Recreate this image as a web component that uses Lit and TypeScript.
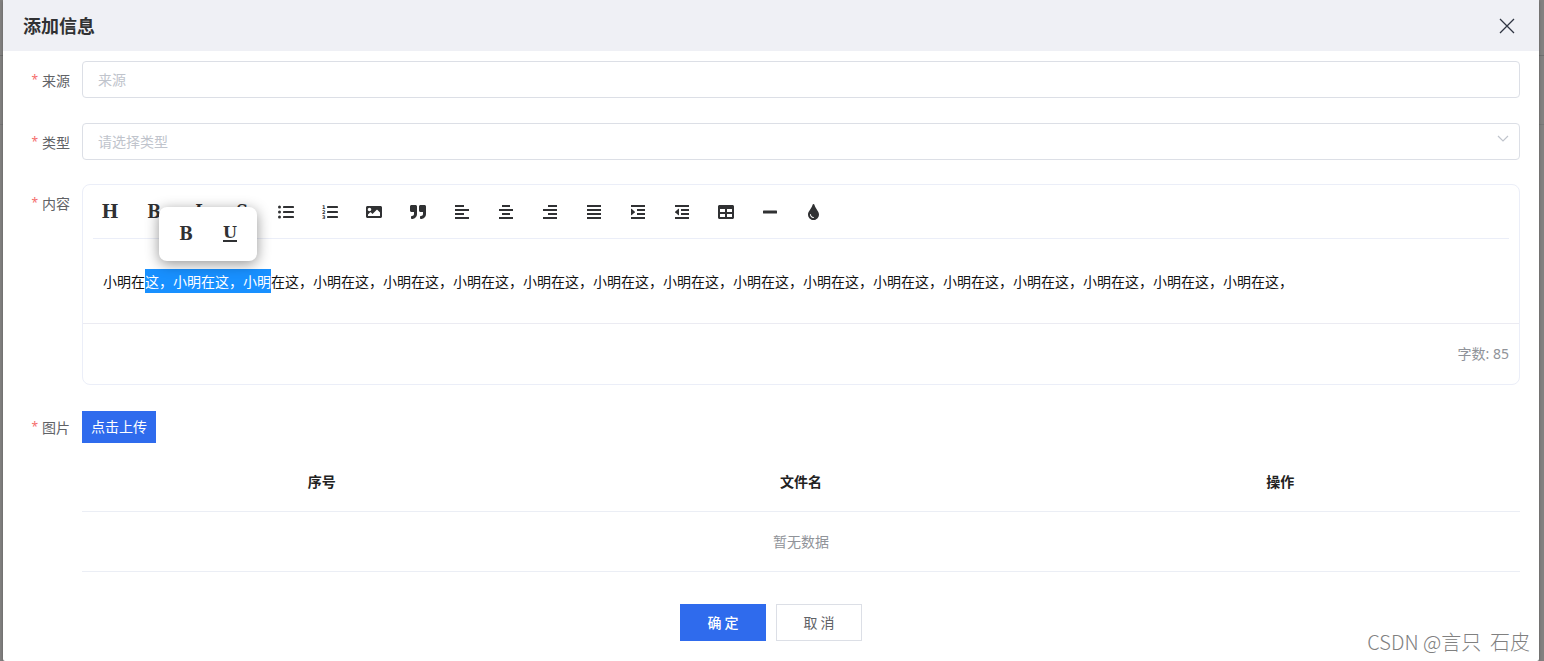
import { LitElement, html, svg, css, type TemplateResult } from "lit";
import { customElement, property } from "lit/decorators.js";

const bars = (xs: [number, number][]) =>
  xs.map(([x, w], i) => svg`<rect x=${x} y=${1 + i * 4} width=${w} height="2"></rect>`);

const listBars = [2, 7, 12].map((y) => svg`<rect x="5" y=${y} width="11" height="2" rx="0.4"></rect>`);

const ICONS: Record<string, TemplateResult | unknown> = {
  ul: svg`${listBars}${[3, 8, 13].map((y) => svg`<circle cx="1.5" cy=${y} r="1.5"></circle>`)}`,
  ol: svg`${listBars}${[1, 2, 3].map((n) => svg`<text class="digit" x="0" y=${n * 5}>${n}</text>`)}`,
  image: svg`<path transform="scale(0.03125)" d="M464 448H48c-26.51 0-48-21.49-48-48V112c0-26.51 21.49-48 48-48h416c26.51 0 48 21.49 48 48v288c0 26.51-21.49 48-48 48zM112 120c-30.928 0-56 25.072-56 56s25.072 56 56 56 56-25.072 56-56-25.072-56-56-56zM64 384h384V272l-87.515-87.515c-4.686-4.686-12.284-4.686-16.971 0L208 320l-55.515-55.515c-4.686-4.686-12.284-4.686-16.971 0L64 336v48z"></path>`,
  quote: svg`<path transform="scale(0.03125)" d="M464 32H336c-26.5 0-48 21.5-48 48v128c0 26.5 21.5 48 48 48h80v64c0 35.3-28.7 64-64 64h-8c-13.3 0-24 10.7-24 24v48c0 13.3 10.7 24 24 24h8c88.4 0 160-71.6 160-160V80c0-26.5-21.5-48-48-48zm-288 0H48C21.5 32 0 53.5 0 80v128c0 26.5 21.5 48 48 48h80v64c0 35.3-28.7 64-64 64h-8c-13.3 0-24 10.7-24 24v48c0 13.3 10.7 24 24 24h8c88.4 0 160-71.6 160-160V80c0-26.5-21.5-48-48-48z"></path>`,
  left: bars([[1, 9], [1, 14], [1, 9], [1, 14]]),
  center: bars([[4, 8], [1, 14], [4, 8], [1, 14]]),
  right: bars([[6, 9], [1, 14], [6, 9], [1, 14]]),
  justify: bars([[1, 14], [1, 14], [1, 14], [1, 14]]),
  indent: svg`${bars([[1, 14], [7, 8], [7, 8], [1, 14]])}<path d="M1 5v6q0 .6.5.2L4.900 8.300q.3-.3 0-.6L1.500 4.800Q1 4.400 1 5z"></path>`,
  outdent: svg`${bars([[1, 14], [7, 8], [7, 8], [1, 14]])}<path d="M5 5v6q0 .6-.5.2L1.100 8.300q-.3-.3 0-.6L4.500 4.800Q5 4.400 5 5z"></path>`,
  table: svg`<path transform="scale(0.03125)" d="M464 32H48C21.49 32 0 53.49 0 80v352c0 26.51 21.49 48 48 48h416c26.51 0 48-21.49 48-48V80c0-26.51-21.49-48-48-48zM224 416H64v-96h160v96zm0-160H64v-96h160v96zm224 160H288v-96h160v96zm0-160H288v-96h160v96z"></path>`,
  line: svg`<rect x="1" y="6.500" width="14" height="3" rx="0.6"></rect>`,
  drop: svg`<path transform="translate(2 0) scale(0.03125)" d="M205.22 22.09c-7.94-28.78-49.44-30.12-58.44 0C100.01 179.85 0 222.72 0 333.91 0 432.35 78.72 512 176 512s176-79.65 176-178.09c0-111.75-99.79-153.34-146.78-311.82zM176 448c-61.75 0-112-50.25-112-112 0-8.84 7.16-16 16-16s16 7.16 16 16c0 44.11 35.89 80 80 80 8.84 0 16 7.16 16 16s-7.16 16-16 16z"></path>`,
};

const TOOLS: { label: string; glyph?: string; icon?: string }[] = [
  { label: "标题", glyph: "H" },
  { label: "加粗", glyph: "B" },
  { label: "斜体", glyph: "I" },
  { label: "删除线", glyph: "S" },
  { label: "无序列表", icon: "ul" },
  { label: "有序列表", icon: "ol" },
  { label: "图片", icon: "image" },
  { label: "引用", icon: "quote" },
  { label: "左对齐", icon: "left" },
  { label: "居中", icon: "center" },
  { label: "右对齐", icon: "right" },
  { label: "两端对齐", icon: "justify" },
  { label: "增加缩进", icon: "indent" },
  { label: "减少缩进", icon: "outdent" },
  { label: "表格", icon: "table" },
  { label: "分割线", icon: "line" },
  { label: "颜色", icon: "drop" },
];

@customElement("tool-button")
class ToolButton extends LitElement {
  @property() label = "";
  @property() glyph = "";
  @property() icon = "";

  static styles = css`
    :host {
      display: block;
    }
    .tool {
      display: flex;
      align-items: center;
      justify-content: center;
      width: 24px;
      height: 24px;
      padding: 0;
      border: 0;
      background: none;
      color: #303133;
      cursor: pointer;
    }
    .icon {
      display: block;
      width: 16px;
      height: 16px;
      fill: currentColor;
    }
    .digit {
      font: bold 5px "DejaVu Sans", sans-serif;
    }
    .glyph {
      font: bold 18px/18px "DejaVu Serif", serif;
    }
    .narrow {
      font-family: "DejaVu Serif Condensed", "DejaVu Serif", serif;
    }
    .italic {
      font-style: italic;
    }
    .under {
      font-size: 16px;
      line-height: 14px;
      height: 14px;
      border-bottom: 2px solid currentColor;
    }
  `;

  render() {
    const kind = { H: "", B: "narrow", I: "narrow italic", S: "narrow", U: "under" }[this.glyph] ?? "";
    return html`<button class="tool" type="button" aria-label=${this.label}>
      ${this.glyph
        ? html`<span class="glyph ${kind}">${this.glyph}</span>`
        : html`<svg class="icon" viewBox="0 0 16 16" aria-hidden="true">${ICONS[this.icon]}</svg>`}
    </button>`;
  }
}

@customElement("rich-editor")
class RichEditor extends LitElement {
  static styles = css`
    .editor {
      position: relative;
      border: 1px solid #ebeef8;
      border-radius: 8px;
      font-size: 14px;
    }
    .toolbar {
      display: flex;
      flex-wrap: wrap;
      gap: 20px;
      margin: 0 10px;
      padding: 15px 5px 14px;
      border-bottom: 1px solid #ebeef8;
    }
    .content {
      padding: 30px 20px;
      line-height: 24px;
      color: #111;
      outline: none;
    }
    .picked {
      display: inline-block;
      background: #1890ff;
      color: #fff;
    }
    .count {
      border-top: 1px solid #ebebf2;
      padding: 18px 10px;
      line-height: 24px;
      text-align: right;
      color: #909399;
      font-family: "Noto Sans", "Noto Sans CJK SC", sans-serif;
    }
    .bubble {
      position: absolute;
      top: 22px;
      left: 76px;
      display: flex;
      gap: 20px;
      padding: 15px;
      border-radius: 8px;
      background: #fff;
      box-shadow: 0 3px 14px rgba(0, 0, 0, 0.42);
    }
  `;

  render() {
    const phrase = "小明在这，";
    return html`<div class="editor">
      <div class="toolbar" role="toolbar" aria-label="编辑工具">
        ${TOOLS.map(
          (t) => html`<tool-button .label=${t.label} .glyph=${t.glyph ?? ""} .icon=${t.icon ?? ""}></tool-button>`,
        )}
      </div>
      <div class="content" role="textbox" aria-label="内容" aria-multiline="true" contenteditable="true">小明在<span class="picked">这，小明在这，小明</span>在这，${phrase.repeat(14)}</div>
      <div class="count">字数: 85</div>
      <div class="bubble" role="toolbar" aria-label="选中文字">
        <tool-button label="加粗" glyph="B"></tool-button>
        <tool-button label="下划线" glyph="U"></tool-button>
      </div>
    </div>`;
  }
}

@customElement("app-root")
class AppRoot extends LitElement {
  static styles = css`
    :host {
      display: block;
      box-sizing: border-box;
      min-height: 100vh;
      padding: 0 5px 0 3px;
      overflow: hidden;
      position: relative;
      font-family: "Noto Sans CJK SC", sans-serif;
      font-size: 14px;
      color: #606266;
      background: linear-gradient(#828180 55px, #6f6f6f 55px, #6f6f6f 56px, #828180 56px, #828180 124px, #777 124px, #777 125px, #828180 125px);
    }
    .dialog {
      display: flex;
      flex-direction: column;
      min-height: 100vh;
      background: #fff;
      border-radius: 0 0 2px 2px;
      box-shadow: 0 1px 3px rgba(0, 0, 0, 0.3);
    }
    .header {
      box-sizing: border-box;
      display: flex;
      align-items: center;
      justify-content: space-between;
      height: 51px;
      padding: 0 24px 0 20px;
      background: #eff0f5;
    }
    .title {
      margin: 0;
      padding-bottom: 2px;
      font-size: 18px;
      line-height: 24px;
      font-weight: 700;
      color: #303133;
    }
    .close {
      display: block;
      width: 16px;
      height: 16px;
      padding: 0;
      border: 0;
      background: none;
      cursor: pointer;
    }
    .close-icon {
      display: block;
      stroke: #2f3542;
      stroke-width: 1.3;
      fill: none;
    }
    .form {
      padding: 10px 19px 20px 20px;
    }
    .row {
      display: grid;
      grid-template-columns: 47px minmax(0, 1fr);
      column-gap: 12px;
      margin-bottom: 25px;
    }
    .row.tight {
      margin-bottom: 24px;
    }
    .row.loose {
      margin-bottom: 26px;
    }
    .row.last {
      margin-bottom: 0;
    }
    .label {
      display: flex;
      justify-content: flex-end;
      align-items: center;
      align-self: start;
      gap: 4px;
      height: 37px;
      line-height: 20px;
      white-space: nowrap;
    }
    .label.short {
      height: 32px;
    }
    .label::before {
      content: "*";
      color: #f56c6c;
      font-family: "Noto Sans", sans-serif;
      font-size: 12px;
    }
    .field {
      box-sizing: border-box;
      display: block;
      width: 100%;
      height: 37px;
      margin: 0;
      padding: 0 15px 2px;
      border: 1px solid #dcdfe6;
      border-radius: 4px;
      background: #fff;
      font: inherit;
      color: #c0c4cc;
      appearance: none;
      outline: none;
    }
    .field::placeholder {
      color: #c0c4cc;
      opacity: 1;
    }
    .select-box {
      display: grid;
    }
    .select-box > * {
      grid-area: 1 / 1;
    }
    .arrow {
      justify-self: end;
      margin: 11px 11px 0 0;
      width: 12px;
      height: 10px;
      stroke: #c0c4cc;
      stroke-width: 1.2;
      fill: none;
      pointer-events: none;
    }
    .btn {
      box-sizing: border-box;
      border: 1px solid #dcdfe6;
      background: #fff;
      color: #606266;
      font: inherit;
      line-height: 20px;
      cursor: pointer;
    }
    .primary {
      border-color: #2f6bed;
      background: #2f6bed;
      color: #fff;
    }
    .upload {
      display: block;
      height: 32px;
      padding: 0 8px 2px;
    }
    .files {
      width: 100%;
      margin-top: 9px;
      border-collapse: separate;
      border-spacing: 0;
      table-layout: fixed;
      text-align: center;
    }
    .cell {
      height: 60px;
      box-sizing: border-box;
      padding: 0 0 2px;
      border-bottom: 1px solid #ebeef5;
    }
    .head {
      font-weight: 700;
      font-size: 14px;
      color: #222;
    }
    .empty {
      color: #909399;
    }
    .footer {
      display: flex;
      justify-content: center;
      gap: 10px;
      margin-top: 12px;
      padding-bottom: 20px;
    }
    .action {
      width: 86px;
      height: 37px;
      padding: 0 0 2px;
    }
    .strong {
      font-weight: 500;
    }
    .watermark {
      position: absolute;
      right: 14px;
      bottom: 5px;
      font-size: 20px;
      line-height: 28px;
      font-weight: 300;
      white-space: pre;
      color: #808080;
      pointer-events: none;
    }
  `;

  render() {
    return html`
      <main class="dialog" role="dialog" aria-labelledby="title">
        <header class="header">
          <h1 class="title" id="title">添加信息</h1>
          <button class="close" type="button" aria-label="关闭">
            <svg class="close-icon" width="16" height="16" viewBox="0 0 16 16" aria-hidden="true">
              <path d="M1 1l14 14M15 1L1 15"></path>
            </svg>
          </button>
        </header>
        <form class="form">
          <div class="row">
            <label class="label" for="source">来源</label>
            <input class="field" id="source" type="text" placeholder="来源" />
          </div>
          <div class="row tight">
            <label class="label" for="type">类型</label>
            <div class="select-box">
              <select class="field" id="type">
                <option>请选择类型</option>
              </select>
              <svg class="arrow" viewBox="0 0 12 10" aria-hidden="true"><path d="M1 2l5 5 5-5"></path></svg>
            </div>
          </div>
          <div class="row loose">
            <span class="label">内容</span>
            <rich-editor></rich-editor>
          </div>
          <div class="row last">
            <label class="label short" for="upload">图片</label>
            <div>
              <button class="btn primary upload" id="upload" type="button">点击上传</button>
              <table class="files">
                <thead>
                  <tr>
                    <th class="cell head" scope="col">序号</th>
                    <th class="cell head" scope="col">文件名</th>
                    <th class="cell head" scope="col">操作</th>
                  </tr>
                </thead>
                <tbody>
                  <tr>
                    <td class="cell empty" colspan="3">暂无数据</td>
                  </tr>
                </tbody>
              </table>
            </div>
          </div>
        </form>
        <div class="footer">
          <button class="btn primary action strong" type="button">确 定</button>
          <button class="btn action" type="button">取 消</button>
        </div>
      </main>
      <div class="watermark">CSDN @言只  石皮</div>
    `;
  }
}
